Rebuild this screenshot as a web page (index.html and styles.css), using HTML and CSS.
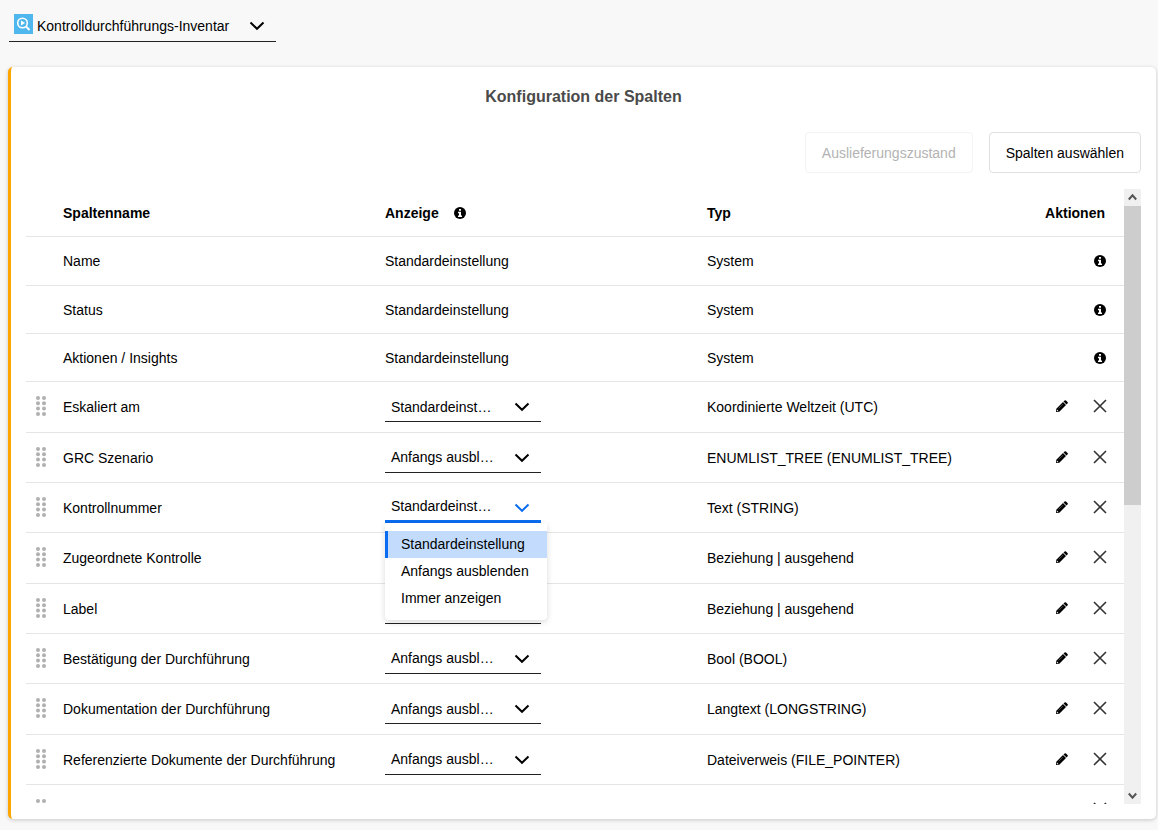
FILE: index.html
```html
<!DOCTYPE html>
<html lang="de">
<head>
<meta charset="utf-8">
<title>Konfiguration der Spalten</title>
<link rel="stylesheet" href="styles.css">
</head>
<body>
<svg class="sprite" aria-hidden="true">
  <symbol id="chevron" viewBox="0 0 16 16"><path d="M1.500 4.500 8 10.800 14.500 4.500" fill="none" stroke="currentColor" stroke-width="2"/></symbol>
  <symbol id="info" viewBox="0 0 12 12"><circle cx="6" cy="6" r="6" fill="#000"/><path d="M5 2h2v1.700H5zM4 4.800h3v3.700h1V10H4V8.500h1V6.200H4z" fill="#fff"/></symbol>
  <symbol id="pencil" viewBox="0 0 12 12"><path d="M0 12 .3 8.700 7 2 10 5 3.300 11.700zM7.500 1.500 8.600.5Q9.300 0 10 .5L11.500 2Q12.200 2.700 11.500 3.400L10.500 4.500z" fill="#000"/><path d="M1 9.600 2.400 11 1.300 11.200.8 10.700z" fill="#fff"/><path d="M2.600 8.400 6.800 4.200" stroke="#777" stroke-width=".6"/></symbol>
  <symbol id="cross" viewBox="0 0 14 14"><path d="M1 1 13 13M13 1 1 13" fill="none" stroke="#333" stroke-width="1.600"/></symbol>
  <symbol id="grip" viewBox="0 0 10 20"><g fill="#b0b0b0"><circle cx="2" cy="2" r="2"/><circle cx="8" cy="2" r="2"/><circle cx="2" cy="7.300" r="2"/><circle cx="8" cy="7.300" r="2"/><circle cx="2" cy="12.600" r="2"/><circle cx="8" cy="12.600" r="2"/><circle cx="2" cy="18" r="2"/><circle cx="8" cy="18" r="2"/></g></symbol>
</svg>

<header class="topbar">
  <div class="source">
    <svg class="source-icon" viewBox="0 0 19 20" aria-hidden="true"><path fill="#4fb6ee" d="M0 0h19v20H0z"/><circle cx="8.500" cy="9" r="4.800" fill="none" stroke="#fff" stroke-width="1.600"/><path d="m12 12.500 3.500 3.500" stroke="#fff" stroke-width="2"/><path d="M7 6.500 11 9l-4 2.500z" fill="#fff"/></svg>
    <div class="dropdown source-dropdown">
      <select class="select" aria-label="Inventar"><option>Kontrolldurchführungs-Inventar</option></select>
      <svg class="chevron"><use href="#chevron"/></svg>
    </div>
  </div>
</header>

<main class="card">
  <h1 class="title">Konfiguration der Spalten</h1>
  <div class="toolbar">
    <button class="button" disabled>Auslieferungszustand</button>
    <button class="button">Spalten auswählen</button>
  </div>
  <div class="viewport">
    <div class="scroll-area">
      <table class="columns">
        <colgroup><col class="col-grip"><col><col><col><col class="col-actions"></colgroup>
        <thead>
          <tr><th></th><th>Spaltenname</th><th><span class="heading">Anzeige <svg class="info"><use href="#info"/></svg></span></th><th>Typ</th><th class="actions-heading">Aktionen</th></tr>
        </thead>
        <tbody class="system">
          <tr><td></td><td>Name</td><td>Standardeinstellung</td><td>System</td><td><div class="actions"><button class="icon-button" aria-label="Info"><svg class="info"><use href="#info"/></svg></button></div></td></tr>
          <tr><td></td><td>Status</td><td>Standardeinstellung</td><td>System</td><td><div class="actions"><button class="icon-button" aria-label="Info"><svg class="info"><use href="#info"/></svg></button></div></td></tr>
          <tr><td></td><td>Aktionen / Insights</td><td>Standardeinstellung</td><td>System</td><td><div class="actions"><button class="icon-button" aria-label="Info"><svg class="info"><use href="#info"/></svg></button></div></td></tr>
        </tbody>
        <tbody class="custom">
          <tr><td><svg class="grip"><use href="#grip"/></svg></td><td>Eskaliert am</td><td><div class="dropdown"><select class="select" aria-label="Anzeige: Eskaliert am"><option>Standardeinstellung</option><option>Anfangs ausblenden</option><option>Immer anzeigen</option></select><svg class="chevron"><use href="#chevron"/></svg></div></td><td>Koordinierte Weltzeit (UTC)</td><td><div class="actions"><button class="icon-button" aria-label="Bearbeiten"><svg class="pencil"><use href="#pencil"/></svg></button><button class="icon-button" aria-label="Entfernen"><svg class="cross"><use href="#cross"/></svg></button></div></td></tr>
          <tr><td><svg class="grip"><use href="#grip"/></svg></td><td>GRC Szenario</td><td><div class="dropdown"><select class="select" aria-label="Anzeige: GRC Szenario"><option>Standardeinstellung</option><option selected>Anfangs ausblenden</option><option>Immer anzeigen</option></select><svg class="chevron"><use href="#chevron"/></svg></div></td><td>ENUMLIST_TREE (ENUMLIST_TREE)</td><td><div class="actions"><button class="icon-button" aria-label="Bearbeiten"><svg class="pencil"><use href="#pencil"/></svg></button><button class="icon-button" aria-label="Entfernen"><svg class="cross"><use href="#cross"/></svg></button></div></td></tr>
          <tr><td><svg class="grip"><use href="#grip"/></svg></td><td>Kontrollnummer</td><td><div class="dropdown is-open"><select class="select" aria-label="Anzeige: Kontrollnummer"><option>Standardeinstellung</option><option>Anfangs ausblenden</option><option>Immer anzeigen</option></select><svg class="chevron"><use href="#chevron"/></svg>
            <ul class="menu" role="listbox" aria-label="Anzeige">
              <li class="menu-item is-selected" role="option" aria-selected="true">Standardeinstellung</li>
              <li class="menu-item" role="option">Anfangs ausblenden</li>
              <li class="menu-item" role="option">Immer anzeigen</li>
            </ul></div></td><td>Text (STRING)</td><td><div class="actions"><button class="icon-button" aria-label="Bearbeiten"><svg class="pencil"><use href="#pencil"/></svg></button><button class="icon-button" aria-label="Entfernen"><svg class="cross"><use href="#cross"/></svg></button></div></td></tr>
          <tr><td><svg class="grip"><use href="#grip"/></svg></td><td>Zugeordnete Kontrolle</td><td><div class="dropdown"><select class="select" aria-label="Anzeige: Zugeordnete Kontrolle"><option>Standardeinstellung</option><option>Anfangs ausblenden</option><option>Immer anzeigen</option></select><svg class="chevron"><use href="#chevron"/></svg></div></td><td>Beziehung | ausgehend</td><td><div class="actions"><button class="icon-button" aria-label="Bearbeiten"><svg class="pencil"><use href="#pencil"/></svg></button><button class="icon-button" aria-label="Entfernen"><svg class="cross"><use href="#cross"/></svg></button></div></td></tr>
          <tr><td><svg class="grip"><use href="#grip"/></svg></td><td>Label</td><td><div class="dropdown"><select class="select" aria-label="Anzeige: Label"><option>Standardeinstellung</option><option>Anfangs ausblenden</option><option>Immer anzeigen</option></select><svg class="chevron"><use href="#chevron"/></svg></div></td><td>Beziehung | ausgehend</td><td><div class="actions"><button class="icon-button" aria-label="Bearbeiten"><svg class="pencil"><use href="#pencil"/></svg></button><button class="icon-button" aria-label="Entfernen"><svg class="cross"><use href="#cross"/></svg></button></div></td></tr>
          <tr><td><svg class="grip"><use href="#grip"/></svg></td><td>Bestätigung der Durchführung</td><td><div class="dropdown"><select class="select" aria-label="Anzeige: Bestätigung der Durchführung"><option>Standardeinstellung</option><option selected>Anfangs ausblenden</option><option>Immer anzeigen</option></select><svg class="chevron"><use href="#chevron"/></svg></div></td><td>Bool (BOOL)</td><td><div class="actions"><button class="icon-button" aria-label="Bearbeiten"><svg class="pencil"><use href="#pencil"/></svg></button><button class="icon-button" aria-label="Entfernen"><svg class="cross"><use href="#cross"/></svg></button></div></td></tr>
          <tr><td><svg class="grip"><use href="#grip"/></svg></td><td>Dokumentation der Durchführung</td><td><div class="dropdown"><select class="select" aria-label="Anzeige: Dokumentation der Durchführung"><option>Standardeinstellung</option><option selected>Anfangs ausblenden</option><option>Immer anzeigen</option></select><svg class="chevron"><use href="#chevron"/></svg></div></td><td>Langtext (LONGSTRING)</td><td><div class="actions"><button class="icon-button" aria-label="Bearbeiten"><svg class="pencil"><use href="#pencil"/></svg></button><button class="icon-button" aria-label="Entfernen"><svg class="cross"><use href="#cross"/></svg></button></div></td></tr>
          <tr><td><svg class="grip"><use href="#grip"/></svg></td><td>Referenzierte Dokumente der Durchführung</td><td><div class="dropdown"><select class="select" aria-label="Anzeige: Referenzierte Dokumente der Durchführung"><option>Standardeinstellung</option><option selected>Anfangs ausblenden</option><option>Immer anzeigen</option></select><svg class="chevron"><use href="#chevron"/></svg></div></td><td>Dateiverweis (FILE_POINTER)</td><td><div class="actions"><button class="icon-button" aria-label="Bearbeiten"><svg class="pencil"><use href="#pencil"/></svg></button><button class="icon-button" aria-label="Entfernen"><svg class="cross"><use href="#cross"/></svg></button></div></td></tr>
          <tr><td><svg class="grip"><use href="#grip"/></svg></td><td></td><td></td><td></td><td><div class="actions"><button class="icon-button" aria-label="Entfernen"><svg class="cross"><use href="#cross"/></svg></button></div></td></tr>
        </tbody>
      </table>
    </div>
    <div class="scrollbar" aria-hidden="true">
      <svg class="scroll-arrow" viewBox="0 0 17 17"><path d="M4.800 10.500 8.500 6.300l3.700 4.200" fill="none" stroke="#555" stroke-width="2"/></svg>
      <div class="track"><div class="thumb"></div></div>
      <svg class="scroll-arrow" viewBox="0 0 17 17"><path d="M4.800 6.500 8.500 10.700l3.700-4.200" fill="none" stroke="#555" stroke-width="2"/></svg>
    </div>
  </div>
</main>
</body>
</html>
```

FILE: styles.css
```css
* { box-sizing: border-box; }

body {
  display: flex;
  flex-direction: column;
  height: 100vh;
  margin: 0;
  overflow: hidden;
  background: #f8f8f8;
  color: #000;
  font: 14px/20px "Liberation Sans", Arial, sans-serif;
}

button, select { font: inherit; color: inherit; }
svg { display: block; }
.sprite { display: none; }

.topbar { padding: 10px 9px 25px; }

.source {
  display: flex;
  align-items: center;
  width: 267px;
  height: 32px;
  padding-left: 5px;
  border-bottom: 1px solid #222;
}
.source-icon { width: 19px; height: 20px; margin-bottom: 4px; }

.dropdown {
  position: relative;
  width: 156px;
}
.select {
  display: block;
  width: 100%;
  height: 30px;
  padding: 0 46px 0 6px;
  border: 0;
  border-bottom: 1px solid #222;
  border-radius: 0;
  outline: 0;
  background: transparent;
  appearance: none;
  overflow: hidden;
  text-overflow: ellipsis;
  white-space: nowrap;
}
.chevron {
  position: absolute;
  top: 7px;
  right: 11px;
  width: 16px;
  height: 16px;
  pointer-events: none;
}
.source-dropdown { flex: 1; }
.source-dropdown .select { padding: 0 40px 0 4px; border-bottom: 0; }

.is-open .select { border-bottom: 3px solid #0a6cf0; }
.is-open .chevron { color: #0a6cf0; }

.menu {
  position: absolute;
  z-index: 1;
  top: 100%;
  left: 0;
  margin: 0;
  padding: 8px 0;
  border-radius: 0 0 4px 4px;
  background: #fff;
  box-shadow: 0 2px 6px rgba(0, 0, 0, .15);
  list-style: none;
  white-space: nowrap;
}
.menu-item {
  width: 162px;
  padding-left: 13px;
  border-left: 3px solid transparent;
  line-height: 27px;
}
.menu-item.is-selected { border-left-color: #0a6cf0; background: #c3dcfd; }

.card {
  display: flex;
  flex: 1;
  flex-direction: column;
  min-height: 0;
  margin: 0 2px 11px 8px;
  padding: 20px 15px 15px;
  border-left: 3px solid #ffa500;
  border-radius: 5px;
  background: #fff;
  box-shadow: 0 1px 4px rgba(0, 0, 0, .2);
}
.title {
  margin: 0 0 25px;
  color: #4a4a4a;
  font-size: 16px;
  line-height: 20px;
  text-align: center;
}
.toolbar {
  display: flex;
  justify-content: flex-end;
  gap: 16px;
  margin-bottom: 16px;
}
.button {
  height: 41px;
  padding: 0 16px;
  border: 1px solid #e0e0e0;
  border-radius: 4px;
  background: #fff;
}
.button:disabled { border-color: #f3f3f3; color: #b3b3b3; }

.viewport { display: flex; flex: 1; min-height: 0; }
.scroll-area { flex: 1; overflow: hidden; }

.columns {
  width: 100%;
  border-collapse: separate;
  border-spacing: 0;
  table-layout: fixed;
}
.col-grip { width: 37px; }
.col-actions { width: 95px; }
.columns th, .columns td {
  height: 48px;
  padding: 0;
  border-bottom: 1px solid #e5e5e5;
  text-align: left;
  vertical-align: middle;
}
.system tr:first-child td { height: 49px; }
.custom td { height: 50px; }
.custom tr:nth-child(3n + 1) td { height: 51px; }
.custom td:first-child, .custom td:last-child { padding-bottom: 2px; }
.columns .actions-heading { padding-right: 19px; text-align: right; }

.heading { display: flex; align-items: center; gap: 15px; }
.info { width: 12px; height: 12px; }
.grip { width: 10px; height: 20px; margin-left: 10px; }
.pencil { width: 12px; height: 12px; }
.cross { width: 14px; height: 14px; }

.actions {
  display: flex;
  justify-content: flex-end;
  gap: 14px;
  padding-right: 12px;
}
.icon-button {
  display: grid;
  place-items: center;
  width: 24px;
  height: 24px;
  padding: 0;
  border: 0;
  background: none;
}

.scrollbar {
  display: flex;
  flex-direction: column;
  width: 17px;
  background: #f0f0f0;
}
.scroll-arrow { width: 17px; height: 17px; }
.track { flex: 1; }
.thumb { height: 51.5%; background: #cdcdcd; }
```
